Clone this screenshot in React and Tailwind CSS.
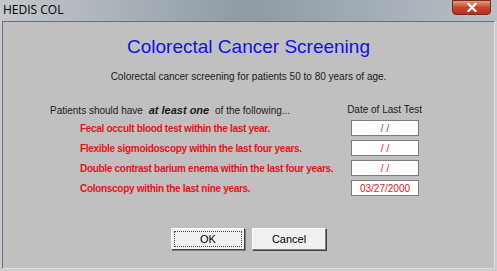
import React from 'react';

const TESTS = [
  { label: 'Fecal occult blood test within the last year.', date: '/ /' },
  { label: 'Flexible sigmoidoscopy within the last four years.', date: '/ /' },
  { label: 'Double contrast barium enema within the last four years.', date: '/ /' },
  { label: 'Colonscopy within the last nine years.', date: '03/27/2000' },
];

function CloseButton() {
  return (
    <div className="w-[39px] h-[15px] rounded-b-[4px] border border-[#7a2a1c] bg-gradient-to-b from-[#e49a84] via-[#c9442a] to-[#b6311c] flex items-center justify-center">
      <svg width="10" height="9" viewBox="0 0 10 9">
        <path d="M1.5 1 L8.5 8 M8.5 1 L1.5 8" stroke="#fff" strokeWidth="2.2" strokeLinecap="square" />
      </svg>
    </div>
  );
}

export default function App() {
  return (
    <div className="w-[497px] h-[271px] bg-[#c9cdd1] flex flex-col overflow-hidden" style={{ fontFamily: '"Liberation Sans", Arial, sans-serif' }}>
      {/* Title bar */}
      <div className="h-[21px] flex items-start justify-between pl-[3px] pr-[6px] bg-gradient-to-r from-[#c4c8cc] via-[#8e9aa4] to-[#b9c0c6]">
        <span className="text-[12px] leading-[18px] text-black pt-[1px]" style={{ fontFamily: '"Open Sans", "Noto Sans", sans-serif' }}>
          HEDIS COL
        </span>
        <CloseButton />
      </div>

      {/* Client area */}
      <div className="flex-1 mx-[2px] mb-[2px] border border-[#6d6d6d] border-r-[#e0e0e0] border-b-[#e0e0e0] bg-[#c0c0c0] flex flex-col items-center">
        <h1 className="mt-[14px] text-[19px] leading-[22px] text-[#1010e8]">Colorectal Cancer Screening</h1>
        <p className="mt-[13px] text-[10px] leading-[12px] text-[#1a1a1a]">
          Colorectal cancer screening for patients 50 to 80 years of age.
        </p>

        <div className="w-full mt-[21px] pl-[47px] pr-[72px] flex justify-between text-[10px] leading-[12px] text-[#1a1a1a]">
          <span>
            Patients should have <b className="italic text-[11px]">&nbsp;at least one&nbsp;</b> of the following...
          </span>
          <span>Date of Last Test</span>
        </div>

        <div className="w-full mt-[3px] flex flex-col gap-[4px] pl-[77px] pr-[75px]">
          {TESTS.map((t) => (
            <div key={t.label} className="flex items-center justify-between h-[16px]">
              <span className="text-[10px] font-bold text-[#e0141c] tracking-[-0.3px]">{t.label}</span>
              <div className="w-[68px] h-[16px] bg-white border border-[#7c7c7c] flex items-center justify-center text-[10px] text-[#e0141c]">
                {t.date}
              </div>
            </div>
          ))}
        </div>

        <div className="mt-auto mb-[18px] flex gap-[7px]">
          <button className="w-[74px] h-[22px] bg-[#f0f0f0] border border-t-white border-l-white border-r-[#404040] border-b-[#404040] shadow-[1px_1px_0_#808080] flex items-center justify-center p-[2px]">
            <span className="w-full h-full border border-dotted border-[#444] flex items-center justify-center text-[11px] text-black">OK</span>
          </button>
          <button className="w-[74px] h-[22px] bg-[#f0f0f0] border border-t-white border-l-white border-r-[#808080] border-b-[#808080] shadow-[1px_1px_0_#404040] flex items-center justify-center text-[11px] text-black">
            Cancel
          </button>
        </div>
      </div>
    </div>
  );
}
